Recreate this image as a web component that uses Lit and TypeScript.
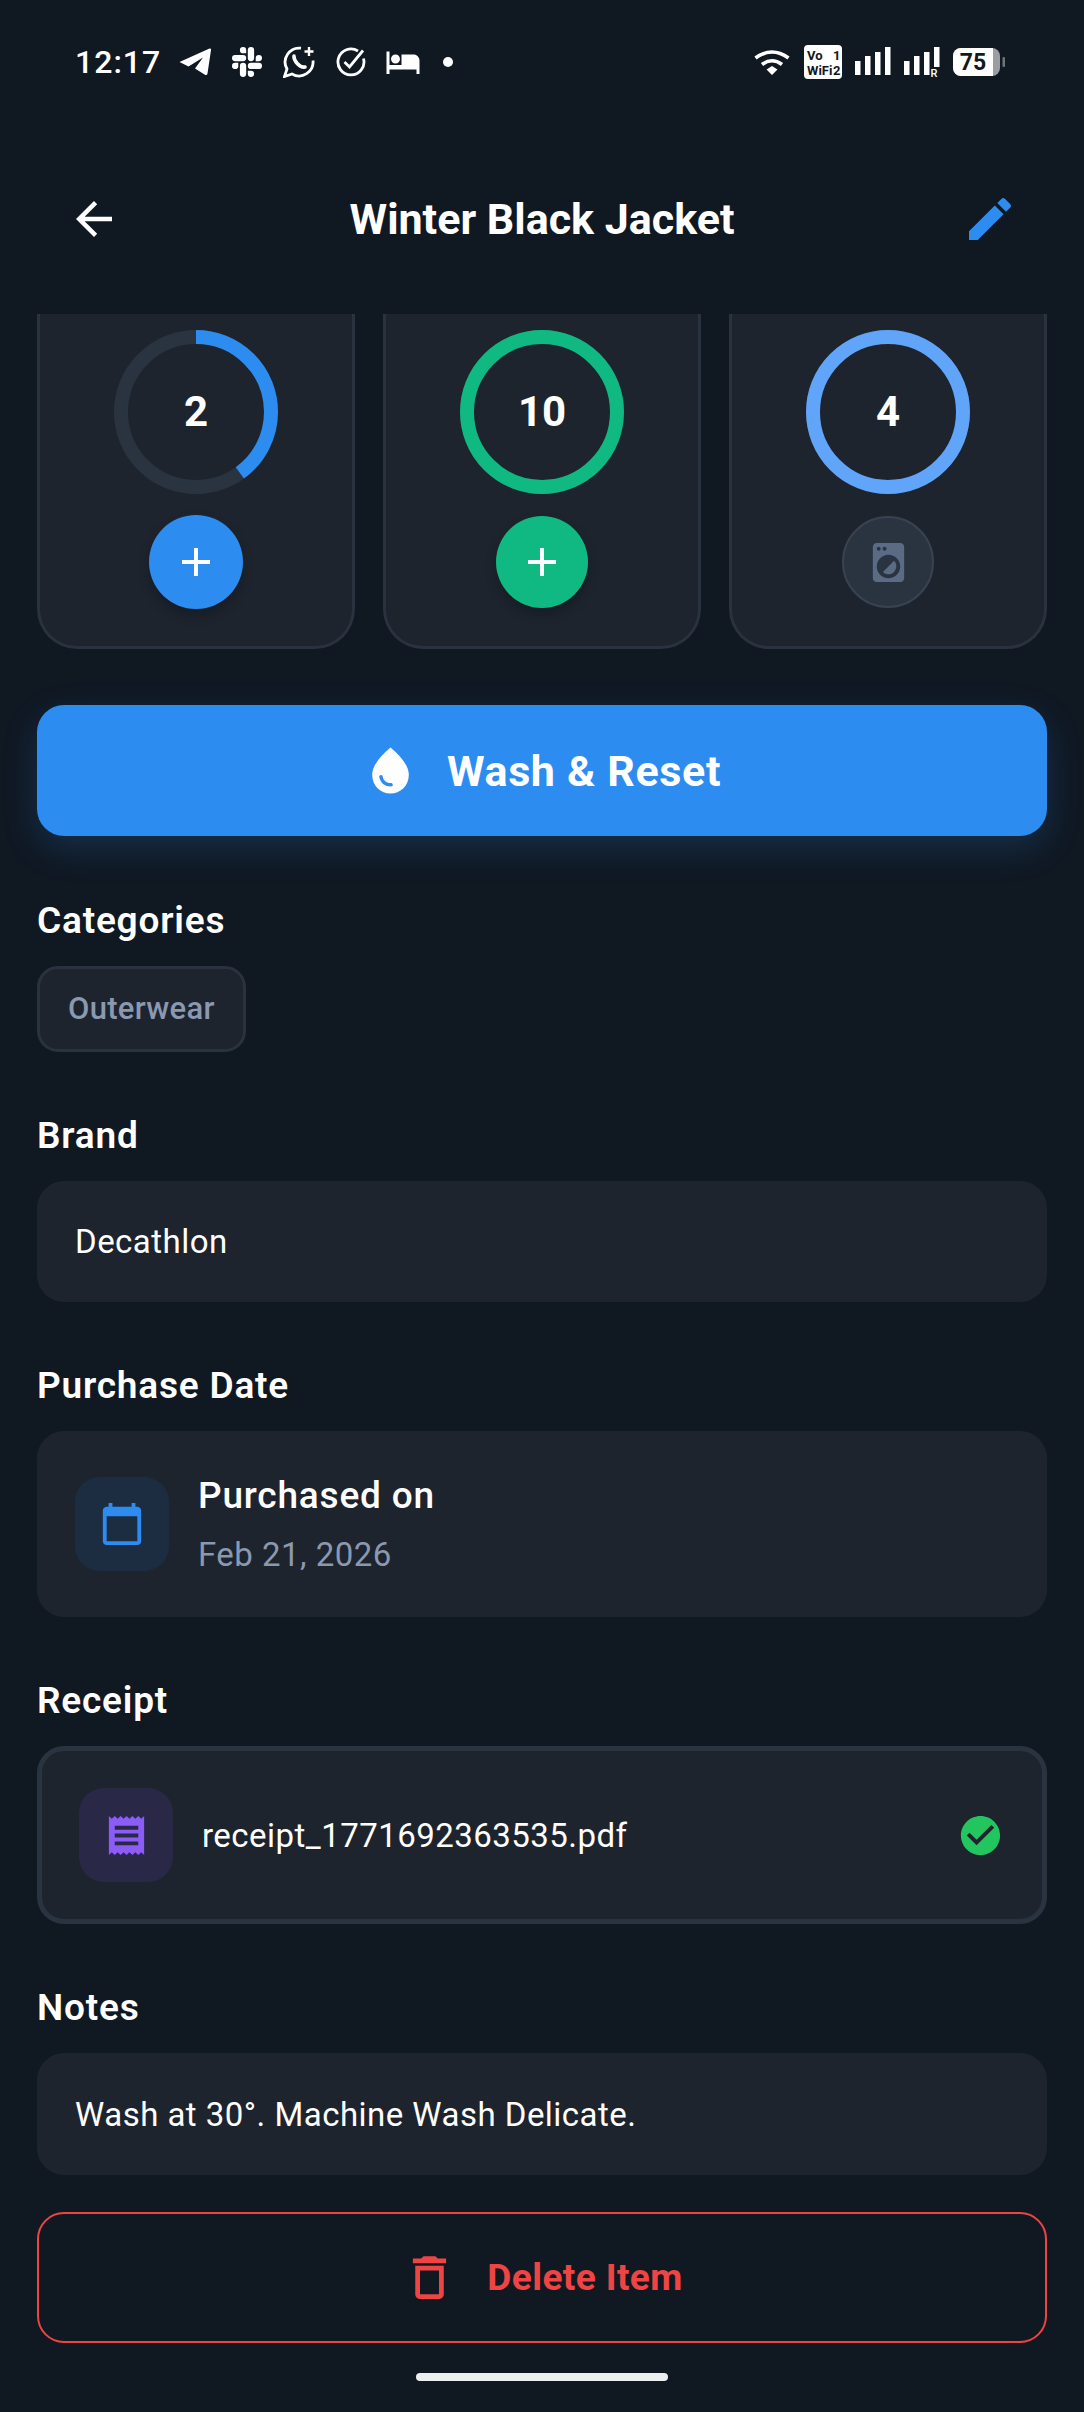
import { LitElement, html, css, svg } from 'lit';
import { customElement } from 'lit/decorators.js';

const ic = (d: string, size: number, cls = '') => html`
  <svg class=${cls} width=${size} height=${size} viewBox="0 0 24 24" fill="currentColor"><path d=${d}></path></svg>
`;

const ICONS = {
  back: 'M20 11H7.83l5.59-5.59L12 4l-8 8 8 8 1.41-1.41L7.83 13H20v-2z',
  edit: 'M3 17.25V21h3.75L17.81 9.94l-3.75-3.75L3 17.25zM20.71 7.04c.39-.39.39-1.02 0-1.41l-2.34-2.34c-.39-.39-1.02-.39-1.41 0l-1.83 1.83 3.75 3.75 1.83-1.83z',
  add: 'M19 13h-6v6h-2v-6H5v-2h6V5h2v6h6v2z',
  laundry: 'M9.17 16.83c1.56 1.56 4.1 1.56 5.66 0 1.56-1.56 1.56-4.1 0-5.66l-5.66 5.66zM18 2.01L6 2c-1.11 0-2 .89-2 2v16c0 1.11.89 2 2 2h12c1.11 0 2-.89 2-2V4c0-1.11-.89-1.99-2-1.99zM10 4c.55 0 1 .45 1 1s-.45 1-1 1-1-.45-1-1 .45-1 1-1zM7 4c.55 0 1 .45 1 1s-.45 1-1 1-1-.45-1-1 .45-1 1-1zm5 16c-3.31 0-6-2.69-6-6s2.69-6 6-6 6 2.69 6 6-2.69 6-6 6z',
  drop: 'M12 2c-5.33 4.55-8 8.48-8 11.8 0 4.98 3.8 8.2 8 8.2s8-3.22 8-8.2c0-3.32-2.67-7.25-8-11.8zM7.83 14c.37 0 .67.26.74.62.41 2.22 2.28 2.98 3.64 2.87.43-.02.79.32.79.75 0 .4-.32.73-.72.75-2.13.13-4.62-1.09-5.19-4.12-.08-.45.28-.87.74-.87z',
  calendar: 'M20 3h-1V1h-2v2H7V1H5v2H4c-1.1 0-2 .9-2 2v16c0 1.1.9 2 2 2h16c1.1 0 2-.9 2-2V5c0-1.1-.9-2-2-2zm0 18H4V8h16v13z',
  receipt: 'M18 17H6v-2h12v2zm0-4H6v-2h12v2zm0-4H6V7h12v2zM3 22l1.5-1.5L6 22l1.5-1.5L9 22l1.5-1.5L12 22l1.5-1.5L15 22l1.5-1.5L18 22l1.5-1.5L21 22V2l-1.5 1.5L18 2l-1.5 1.5L15 2l-1.5 1.5L12 2l-1.5 1.5L9 2 7.5 3.5 6 2 4.5 3.5 3 2v20z',
  check: 'M12 2C6.48 2 2 6.48 2 12s4.48 10 10 10 10-4.48 10-10S17.52 2 12 2zm-2 15l-5-5 1.41-1.41L10 14.17l7.59-7.59L19 8l-9 9z',
  trash: 'M6 19c0 1.1.9 2 2 2h8c1.1 0 2-.9 2-2V7H6v12zM8 9h8v10H8V9zm7.5-5l-1-1h-5l-1 1H5v2h14V4z',
  bed: 'M7 13c1.66 0 3-1.34 3-3S8.66 7 7 7s-3 1.34-3 3 1.34 3 3 3zm12-6h-8v7H3V5H1v15h2v-3h18v3h2v-9c0-2.21-1.79-4-4-4z',
  slack: 'M5.042 15.165a2.528 2.528 0 0 1-2.52 2.523A2.528 2.528 0 0 1 0 15.165a2.527 2.527 0 0 1 2.522-2.52h2.52v2.52zM6.313 15.165a2.527 2.527 0 0 1 2.521-2.52 2.527 2.527 0 0 1 2.521 2.52v6.313A2.528 2.528 0 0 1 8.834 24a2.528 2.528 0 0 1-2.521-2.522v-6.313zM8.834 5.042a2.528 2.528 0 0 1-2.521-2.52A2.528 2.528 0 0 1 8.834 0a2.528 2.528 0 0 1 2.521 2.522v2.52H8.834zM8.834 6.313a2.528 2.528 0 0 1 2.521 2.521 2.528 2.528 0 0 1-2.521 2.521H2.522A2.528 2.528 0 0 1 0 8.834a2.528 2.528 0 0 1 2.522-2.521h6.312zM18.956 8.834a2.528 2.528 0 0 1 2.522-2.521A2.528 2.528 0 0 1 24 8.834a2.528 2.528 0 0 1-2.522 2.521h-2.522V8.834zM17.688 8.834a2.528 2.528 0 0 1-2.523 2.521 2.527 2.527 0 0 1-2.52-2.521V2.522A2.527 2.527 0 0 1 15.165 0a2.528 2.528 0 0 1 2.523 2.522v6.312zM15.165 18.956a2.528 2.528 0 0 1 2.523 2.522A2.528 2.528 0 0 1 15.165 24a2.527 2.527 0 0 1-2.52-2.522v-2.522h2.52zM15.165 17.688a2.527 2.527 0 0 1-2.52-2.523 2.526 2.526 0 0 1 2.52-2.52h6.313A2.527 2.527 0 0 1 24 15.165a2.528 2.528 0 0 1-2.522 2.523h-6.313z',
};

const STATS = [
  { value: 2, progress: 0.4, color: '#2d8cf0', action: 'add', size: 94 },
  { value: 10, progress: 1, color: '#10b981', action: 'add', size: 92 },
  { value: 4, progress: 1, color: '#60a5fa', action: 'wash', size: 92 },
];

@customElement('app-root')
export class AppRoot extends LitElement {
  static styles = css`
    :host {
      display: block;
      width: 1084px;
      height: 2412px;
      overflow: hidden;
      background: #101822;
      color: #fff;
      font-family: Roboto, sans-serif;
    }

    /* status bar */
    .status {
      height: 124px;
      display: flex;
      align-items: center;
      justify-content: space-between;
      padding: 0 79px 0 75px;
      box-sizing: border-box;
    }
    .status-left,
    .status-right {
      display: flex;
      align-items: center;
    }
    .status-left { gap: 21px; }
    .status-right { gap: 13px; }
    .status svg { display: block; flex: none; }
    .time {
      font-size: 32px;
      font-weight: 500;
      letter-spacing: 1px;
      line-height: 40px;
      width: 83px;
      white-space: nowrap;
    }
    .dot {
      width: 10px;
      height: 10px;
      border-radius: 50%;
      background: #fff;
      margin-left: 3px;
    }
    .bed { margin: 0 -2px; }
    .wifi { margin-right: 1px; }

    /* header */
    .header {
      height: 190px;
      display: grid;
      grid-template-columns: 1fr auto 1fr;
      align-items: center;
    }
    .back { margin-left: 67px; display: block; }
    .title {
      font-size: 43px;
      font-weight: 700;
      line-height: 50px;
    }
    .edit {
      justify-self: end;
      margin-right: 66px;
      color: #2d8cf0;
      display: block;
    }

    .content {
      padding: 0 37px;
      display: flex;
      flex-direction: column;
    }

    /* stat cards, scrolled under the header */
    .stats {
      display: grid;
      grid-template-columns: repeat(3, 1fr);
      gap: 28px;
    }
    .stat {
      height: 335px;
      box-sizing: border-box;
      padding-top: 16px;
      background: #1d242e;
      border: 3px solid #29323e;
      border-top: none;
      border-radius: 0 0 40px 40px;
      display: flex;
      flex-direction: column;
      align-items: center;
    }
    .ring {
      position: relative;
      width: 164px;
      height: 164px;
      display: grid;
      place-items: center;
    }
    .ring svg {
      position: absolute;
      inset: 0;
      display: block;
    }
    .ring span {
      font-size: 42px;
      font-weight: 700;
      line-height: 48px;
    }
    .slot {
      height: 94px;
      margin-top: 21px;
      display: grid;
      place-items: center;
    }
    .round {
      border-radius: 50%;
      display: grid;
      place-items: center;
      color: #fff;
      box-shadow: 0 6px 12px rgba(0, 0, 0, 0.22);
    }
    .round.idle {
      box-sizing: border-box;
      background: #2a3441;
      border: 2px solid #384250;
      color: #5b6b84;
      box-shadow: none;
    }
    .round svg { display: block; }

    .wash {
      margin-top: 56px;
      height: 131px;
      border-radius: 27px;
      background: #2d8cf0;
      box-shadow: 0 12px 36px rgba(45, 140, 240, 0.2);
      display: flex;
      align-items: center;
      justify-content: center;
      gap: 29px;
      font-size: 43px;
      font-weight: 700;
      letter-spacing: 0.65px;
    }
    .wash svg, .delete svg { display: block; }

    .sections {
      margin-top: 63px;
      display: flex;
      flex-direction: column;
      gap: 62px;
    }
    .label {
      padding-top: 1px;
      font-size: 37px;
      font-weight: 600;
      letter-spacing: 0.8px;
      line-height: 42px;
      margin-bottom: 24px;
    }
    .chip {
      display: inline-block;
      box-sizing: border-box;
      height: 86px;
      line-height: 80px;
      padding: 0 28px;
      border: 3px solid #29323e;
      border-radius: 21px;
      background: #1d242e;
      color: #8a98b0;
      font-size: 31px;
      font-weight: 500;
      letter-spacing: 0.3px;
      vertical-align: top;
    }
    .chips { height: 86px; }
    .box {
      box-sizing: border-box;
      background: #1d242e;
      border-radius: 27px;
      padding: 0 38px;
      display: flex;
      align-items: center;
      font-size: 33px;
      letter-spacing: 0.47px;
    }
    .box.text { height: 122px; }
    .box.brand { height: 121px; }
    .box.date { height: 186px; gap: 29px; }
    .box.file {
      height: 178px;
      padding-left: 37px;
      border: 5px solid #2a3440;
      gap: 29px;
    }
    .tile {
      width: 94px;
      height: 94px;
      border-radius: 25px;
      display: grid;
      place-items: center;
      flex: none;
    }
    .tile svg { display: block; }
    .tile.blue { background: #1c2d42; color: #2d8cf0; }
    .tile.purple { background: #2a2847; color: #8b5cf6; }
    .date-text {
      padding-top: 1px;
      display: flex;
      flex-direction: column;
      gap: 19px;
    }
    .date-title {
      font-size: 37px;
      font-weight: 500;
      letter-spacing: 0.8px;
      line-height: 42px;
    }
    .date-value {
      line-height: 38px;
      color: #8a98b0;
    }
    .file-name { flex: 1; }
    .ok { color: #22c55e; display: block; flex: none; }

    .delete {
      margin-top: 37px;
      height: 131px;
      box-sizing: border-box;
      border: 2.5px solid #ef4444;
      border-radius: 27px;
      color: #ef4444;
      display: flex;
      align-items: center;
      justify-content: center;
      gap: 29px;
      font-size: 37px;
      font-weight: 700;
      letter-spacing: 0.4px;
    }

    .home {
      width: 252px;
      height: 8px;
      border-radius: 4px;
      background: #eceef0;
      margin: 30px auto 0;
    }
  `;

  private _ring(progress: number, color: string) {
    const r = 75;
    const c = 2 * Math.PI * r;
    return html`
      <svg width="164" height="164" viewBox="0 0 164 164" fill="none">
        ${svg`<circle cx="82" cy="82" r=${r} stroke="#2a3441" stroke-width="14"></circle>`}
        ${svg`<circle cx="82" cy="82" r=${r} stroke=${color} stroke-width="14"
          stroke-dasharray="${c * progress} ${c}" transform="rotate(-90 82 82)"></circle>`}
      </svg>
    `;
  }

  private _signal(roaming: boolean) {
    return html`
      <svg width="36" height="30" viewBox="0 0 36 30" fill="#fff">
        <rect x="0" y="14" width="5.5" height="14"></rect>
        <rect x="10" y="9" width="5.5" height="19"></rect>
        <rect x="20" y="5" width="5.5" height="23"></rect>
        ${roaming
          ? svg`<rect x="30" y="0" width="5.5" height="20"></rect>
              <text x="26.5" y="29.5" font-family="Roboto" font-size="11" font-weight="500">R</text>`
          : svg`<rect x="30" y="0" width="5.5" height="28"></rect>`}
      </svg>
    `;
  }

  private _statusBar() {
    return html`
      <div class="status">
        <div class="status-left">
          <div class="time">12:17</div>
          <svg width="32" height="28" viewBox="0 0 32 28" fill="#fff">
            <path d="M.5 14 30.5.6Q32.4 0 32 2L28.5 25.5Q28 28 25.5 26.5L16 20.5 24 9.5 9.5 18.5Z"></path>
          </svg>
          <svg width="30" height="30" viewBox="0 0 24 24" fill="#fff"><path d=${ICONS.slack}></path></svg>
          <svg width="32" height="32" viewBox="0 0 32 32" fill="none" stroke="#fff" stroke-width="2.8">
            <path d="M18 2.2A14 14 0 0 0 4 23L1.5 30.5 9 28A14 14 0 0 0 30 14.5"></path>
            <path d="M11 10C10.5 15 17 22 22 21" stroke-width="3.6" stroke-linecap="round"></path>
            <path d="M26 1v9M21.5 5.5h9" stroke-width="2.4"></path>
          </svg>
          <svg width="30" height="30" viewBox="0 0 30 30" fill="none" stroke="#fff" stroke-width="2.8">
            <path d="M22 4A13 13 0 1 0 27.5 11.5"></path>
            <path d="M8.5 15 13.5 20 27 3.5"></path>
          </svg>
          <svg class="bed" width="36" height="36" viewBox="0 0 24 24" fill="#fff"><path d=${ICONS.bed}></path></svg>
          <div class="dot"></div>
        </div>
        <div class="status-right">
          <svg class="wifi" width="36" height="26" viewBox="0 0 36 26" fill="none" stroke="#fff" stroke-width="3.6">
            <path d="M1.5 9Q18-3 34.5 9"></path>
            <path d="M8 15.5Q18 8 28 15.5"></path>
            <path d="M12.5 20.5 18 17 23.5 20.5 18 26Z" fill="#fff" stroke="none"></path>
          </svg>
          <svg width="38" height="34" viewBox="0 0 38 34">
            <rect width="38" height="34" rx="4" fill="#fff"></rect>
            <g fill="#101822" font-family="Roboto" font-size="13" font-weight="700">
              <text x="3" y="15">Vo</text><text x="29" y="15">1</text>
              <text x="3" y="30">WiFi</text><text x="29" y="30">2</text>
            </g>
          </svg>
          ${this._signal(false)}
          ${this._signal(true)}
          <svg width="52" height="28" viewBox="0 0 52 28">
            <rect width="47" height="28" rx="8" fill="#9a9ea3"></rect>
            <path d="M8 0H40V28H8A8 8 0 0 1 0 20V8A8 8 0 0 1 8 0Z" fill="#fff"></path>
            <rect x="49.5" y="9" width="2.5" height="10" rx="1" fill="#6f7479"></rect>
            <text x="20" y="22" text-anchor="middle" fill="#101822" font-family="Roboto" font-size="23" font-weight="700">75</text>
          </svg>
        </div>
      </div>
    `;
  }

  render() {
    return html`
      ${this._statusBar()}
      <div class="header">
        ${ic(ICONS.back, 54, 'back')}
        <div class="title">Winter Black Jacket</div>
        ${ic(ICONS.edit, 56, 'edit')}
      </div>
      <div class="content">
        <div class="stats">
          ${STATS.map(s => html`
            <div class="stat">
              <div class="ring">
                ${this._ring(s.progress, s.color)}
                <span>${s.value}</span>
              </div>
              <div class="slot">
                ${s.action === 'add'
                  ? html`<div class="round" style="background:${s.color};width:${s.size}px;height:${s.size}px">${ic(ICONS.add, 48)}</div>`
                  : html`<div class="round idle" style="width:${s.size}px;height:${s.size}px">${ic(ICONS.laundry, 47)}</div>`}
              </div>
            </div>
          `)}
        </div>

        <div class="wash">${ic(ICONS.drop, 55)}<span>Wash &amp; Reset</span></div>

        <div class="sections">
          <section>
            <div class="label">Categories</div>
            <div class="chips"><span class="chip">Outerwear</span></div>
          </section>
          <section>
            <div class="label">Brand</div>
            <div class="box brand">Decathlon</div>
          </section>
          <section>
            <div class="label">Purchase Date</div>
            <div class="box date">
              <div class="tile blue">${ic(ICONS.calendar, 46)}</div>
              <div class="date-text">
                <div class="date-title">Purchased on</div>
                <div class="date-value">Feb 21, 2026</div>
              </div>
            </div>
          </section>
          <section>
            <div class="label">Receipt</div>
            <div class="box file">
              <div class="tile purple">${ic(ICONS.receipt, 47)}</div>
              <div class="file-name">receipt_1771692363535.pdf</div>
              ${ic(ICONS.check, 47, 'ok')}
            </div>
          </section>
          <section>
            <div class="label">Notes</div>
            <div class="box text">Wash at 30°. Machine Wash Delicate.</div>
          </section>
        </div>

        <div class="delete">${ic(ICONS.trash, 57)}<span>Delete Item</span></div>
      </div>
      <div class="home"></div>
    `;
  }
}

declare global {
  interface HTMLElementTagNameMap {
    'app-root': AppRoot;
  }
}
